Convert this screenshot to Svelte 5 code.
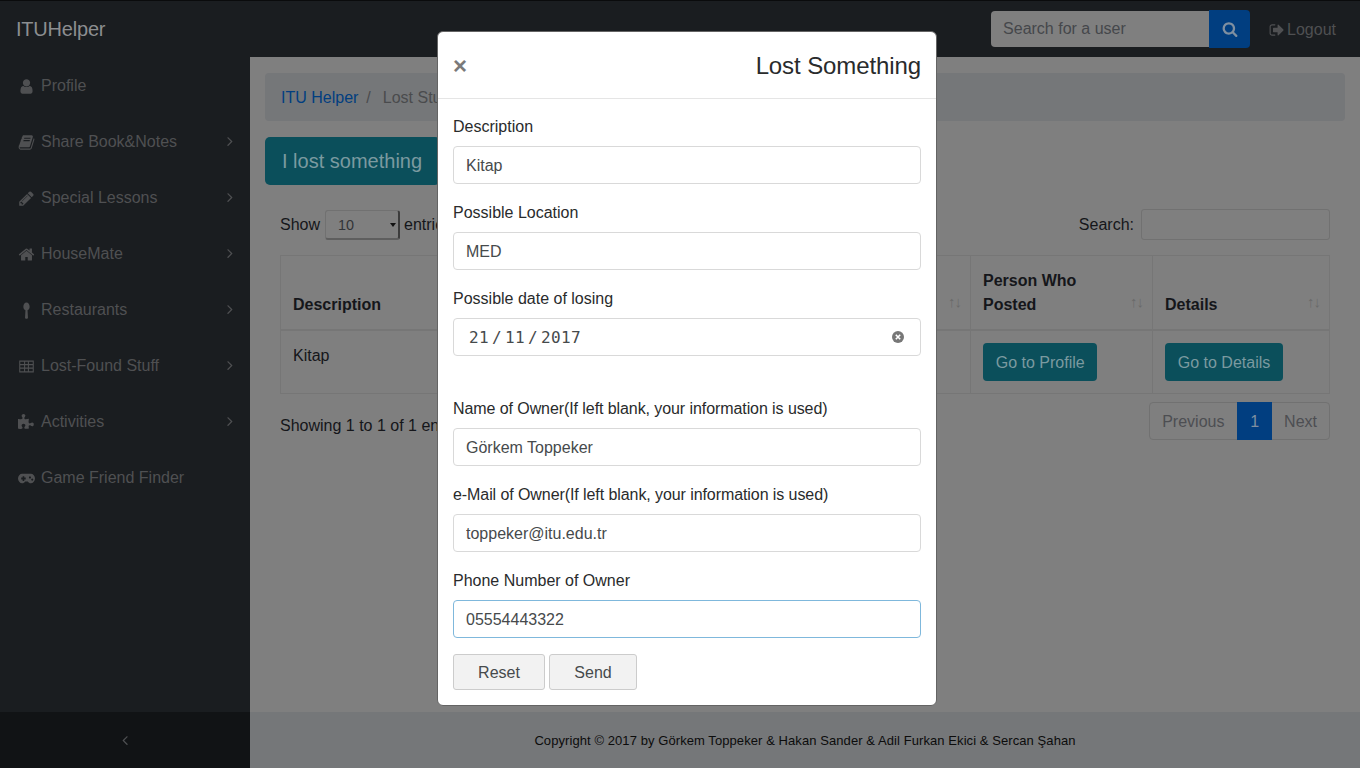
<script>
  const icons = {
    user: 'M1536 1399q0 109-62.5 187t-150.5 78h-854q-88 0-150.5-78t-62.5-187q0-85 8.5-160.5t31.5-152 58.5-131 94-89 134.5-34.5q131 128 313 128t313-128q76 0 134.5 34.5t94 89 58.5 131 31.5 152 8.5 160.5zm-256-887q0 159-112.5 271.5t-271.5 112.5-271.5-112.5-112.5-271.5 112.5-271.5 271.5-112.5 271.5 112.5 112.5 271.5z',
    book: 'M1703 478q40 57 18 129l-275 906q-19 64-76.5 107.5t-122.5 43.5h-923q-77 0-148.5-53.5t-99.5-131.5q-24-67-2-127 0-4 3-27t4-37q1-8-3-21.5t-3-19.5q2-11 8-21t16.5-23.5 16.5-23.5q23-38 45-91.5t30-91.5q3-10 .5-30t-.5-28q3-11 17-28t17-23q21-36 42-92t25-90q1-9-2.5-32t.5-28q4-13 22-30.5t22-22.5q19-26 42.5-84.5t27.5-96.5q1-8-3-25.5t-2-26.5q2-8 9-18t18-23 17-21q8-12 16.5-30.5t15-35 16-36 19.5-32 26.5-23.5 36-11.5 47.5 5.5l-1 3q38-9 51-9h761q74 0 114 56t18 130l-274 906q-36 119-71.5 153.5t-128.5 34.5h-869q-27 0-38 15-11 16-1 43 24 70 144 70h923q29 0 56-15.5t35-41.5l300-987q7-22 5-57 38 15 59 43zm-1064 2q-4 13 2 22.5t20 9.5h608q13 0 25.5-9.5t16.5-22.5l21-64q4-13-2-22.5t-20-9.5h-608q-13 0-25.5 9.5t-16.5 22.5zm-83 256q-4 13 2 22.5t20 9.5h608q13 0 25.5-9.5t16.5-22.5l21-64q4-13-2-22.5t-20-9.5h-608q-13 0-25.5 9.5t-16.5 22.5z',
    pencil: 'M491 1536l91-91-235-235-91 91v107h128v128h107zm523-928q0-22-22-22-10 0-17 7l-542 542q-7 7-7 17 0 22 22 22 10 0 17-7l542-542q7-7 7-17zm-54-192l416 416-832 832h-416v-416zm683 96q0 53-37 90l-166 166-416-416 166-165q36-38 90-38 53 0 91 38l235 234q37 39 37 91z',
    home: 'M1472 992v480q0 26-19 45t-45 19h-384v-384h-256v384h-384q-26 0-45-19t-19-45v-480q0-1 .5-3t.5-3l575-474 575 474q1 2 1 6zm223-69l-62 74q-8 9-21 11h-3q-13 0-21-7l-692-577-692 577q-12 8-24 7-13-2-21-11l-62-74q-8-10-7-23.5t11-21.5l719-599q32-26 76-26t76 26l244 204v-195q0-14 9-23t23-9h192q14 0 23 9t9 23v408l219 182q10 8 11 21.5t-7 23.5z',
    spoon: 'M896 60c190 0 330 190 330 430 0 180-90 320-220 370l44 790c4 70-80 110-154 110s-158-40-154-110l44-790c-130-50-220-190-220-370 0-240 140-430 330-430z',
    table: 'M128 256h1536v1280H128zM240 384v256h400V384zm512 0v256h288V384zm400 0v256h400V384zM240 752v256h400V752zm512 0v256h288V752zm400 0v256h400V752zM240 1120v288h400v-288zm512 0v288h288v-288zm400 0v288h400v-288z',
    puzzle: 'M1664 1098q0 81-44.5 135t-123.5 54q-41 0-77.5-17.5t-59-38-56.5-38-71-17.5q-110 0-110 124 0 39 16 115t15 115v5q-22 0-33 1-34 3-97.5 11.5t-115.5 13.5-98 5q-61 0-103-26.5t-42-83.5q0-37 17.5-71t38-56.5 38-59 17.5-77.5q0-79-54-123.5t-135-44.5q-84 0-143 45.5t-59 127.5q0 43 15 83t33.5 64.5 33.5 53 15 50.5q0 45-46 89-37 35-117 35-95 0-245-24-9-2-27.5-4t-27.5-4l-13-2q-1 0-3-1-2 0-2-1v-1024q2 1 17.5 3.5t34 5 21.5 3.5q150 24 245 24 80 0 117-35 46-44 46-89 0-22-15-50.5t-33.5-53-33.5-64.5-15-83q0-82 59-127.5t144-45.5q80 0 134 44.5t54 123.5q0 41-17.5 77.5t-38 59-38 56.5-17.5 71q0 57 42 83.5t103 26.5q64 0 180-15t163-17v2q-1 2-3.5 17.5t-5 34-3.5 21.5q-24 150-24 245 0 80 35 117 44 46 89 46 22 0 50.5-15t53-33.5 64.5-33.5 83-15q82 0 127.5 59t45.5 143z',
    gamepad: 'M440 400h912c240 0 440 220 440 500s-200 500-440 500c-150 0-240-80-320-190H760c-80 110-170 190-320 190C200 1400 0 1180 0 900s200-500 440-500zM340 800v200h150v150h170V1000h150V800H660V650H490v150zm920-130a110 110 0 1 0 .1 0zm240 230a110 110 0 1 0 .1 0z',
    signout: 'M704 1440q0 4 1 20t.5 26.5-3 23.5-10 19.5-20.5 6.5h-320q-119 0-203.5-84.5t-84.5-203.5v-704q0-119 84.5-203.5t203.5-84.5h320q13 0 22.5 9.5t9.5 22.5q0 4 1 20t.5 26.5-3 23.5-10 19.5-20.5 6.5h-320q-66 0-113 47t-47 113v704q0 66 47 113t113 47h312l11.5 1 11.5 3 8 5.5 7 9 2 13.5zm928-544q0 26-19 45l-544 544q-19 19-45 19t-45-19-19-45v-288h-448q-26 0-45-19t-19-45v-384q0-26 19-45t45-19h448v-288q0-26 19-45t45-19 45 19l544 544q19 19 19 45z',
    search: 'M1216 832q0-185-131.5-316.5t-316.5-131.5-316.5 131.5-131.5 316.5 131.5 316.5 316.5 131.5 316.5-131.5 131.5-316.5zm512 832q0 52-38 90t-90 38q-54 0-90-38l-343-342q-179 124-399 124-143 0-273.5-55.5t-225-150-150-225-55.5-273.5 55.5-273.5 150-225 225-150 273.5-55.5 273.5 55.5 225 150 150 225 55.5 273.5q0 220-124 399l343 343q37 37 37 90z',
    right: 'M1171 960q0 13-10 23l-466 466q-10 10-23 10t-23-10l-50-50q-10-10-10-23t10-23l393-393-393-393q-10-10-10-23t10-23l50-50q10-10 23-10t23 10l466 466q10 10 10 23z',
    left: 'M1203 544q0 13-10 23l-393 393 393 393q10 10 10 23t-10 23l-50 50q-10 10-23 10t-23-10l-466-466q-10-10-10-23t10-23l466-466q10-10 23-10t23 10l50 50q10 10 10 23z'
  };

  const menu = [
    { label: 'Profile', icon: 'user' },
    { label: 'Share Book&Notes', icon: 'book', sub: true },
    { label: 'Special Lessons', icon: 'pencil', sub: true },
    { label: 'HouseMate', icon: 'home', sub: true },
    { label: 'Restaurants', icon: 'spoon', sub: true },
    { label: 'Lost-Found Stuff', icon: 'table', sub: true },
    { label: 'Activities', icon: 'puzzle', sub: true },
    { label: 'Game Friend Finder', icon: 'gamepad' }
  ];

  const fields = [
    { label: 'Name of Owner(If left blank, your information is used)', value: 'Görkem Toppeker', tight: true },
    { label: 'e-Mail of Owner(If left blank, your information is used)', value: 'toppeker@itu.edu.tr', tight: true },
    { label: 'Phone Number of Owner', value: '05554443322', focus: true }
  ];
</script>

<div class="page">
  <nav class="topbar">
    <span class="brand">ITUHelper</span>
    <div class="topright">
      <div class="usersearch">
        <input type="text" placeholder="Search for a user" />
        <button class="searchbtn" aria-label="Search">
          <svg viewBox="0 0 1792 1792" width="16" height="16"><path d={icons.search} /></svg>
        </button>
      </div>
      <a class="logout" href="#top">
        <svg viewBox="0 0 1792 1792" width="16" height="16"><path d={icons.signout} /></svg>
        Logout
      </a>
    </div>
  </nav>

  <div class="body">
    <aside class="sidebar">
      <ul>
        {#each menu as item}
          <li>
            <svg class="ico" viewBox="0 0 1792 1792" width="17" height="17"><path fill-rule="evenodd" d={icons[item.icon]} /></svg>
            <span>{item.label}</span>
            {#if item.sub}
              <svg class="chev" viewBox="0 0 1792 1792" width="16" height="16"><path d={icons.right} /></svg>
            {/if}
          </li>
        {/each}
      </ul>
      <div class="toggler">
        <svg viewBox="0 0 1792 1792" width="16" height="16"><path d={icons.left} /></svg>
      </div>
    </aside>

    <div class="content">
      <main>
        <ol class="crumbs">
          <li><a href="#top">ITU Helper</a></li>
          <li class="sep">/</li>
          <li>Lost Stuff</li>
        </ol>
        <button class="btn-lost">I lost something</button>

        <section class="wrapper">
          <div class="tools">
            <div class="length">
              Show
              <div class="select"><span>10</span><i></i></div>
              entries
            </div>
            <label class="filter">Search: <input type="search" /></label>
          </div>

          <table>
            <colgroup>
              <col class="c1" /><col class="c2" /><col class="c3" /><col class="c4" /><col />
            </colgroup>
            <thead>
              <tr>
                <th>Description</th>
                <th></th>
                <th><span class="sort">↑↓</span></th>
                <th>Person Who Posted<span class="sort">↑↓</span></th>
                <th>Details<span class="sort">↑↓</span></th>
              </tr>
            </thead>
            <tbody>
              <tr>
                <td>Kitap</td>
                <td></td>
                <td></td>
                <td><button class="btn-info">Go to Profile</button></td>
                <td><button class="btn-info">Go to Details</button></td>
              </tr>
            </tbody>
          </table>

          <div class="tablefoot">
            <div class="info">Showing 1 to 1 of 1 entries</div>
            <div class="pager">
              <span class="prev">Previous</span>
              <span class="current">1</span>
              <span>Next</span>
            </div>
          </div>
        </section>
      </main>
      <footer>Copyright © 2017 by Görkem Toppeker &amp; Hakan Sander &amp; Adil Furkan Ekici &amp; Sercan Şahan</footer>
    </div>
  </div>

  <div class="modal">
    <header>
      <span class="close">×</span>
      <h4>Lost Something</h4>
    </header>
    <form>
      <div class="group">
        <label for="f-desc">Description</label>
        <input id="f-desc" value="Kitap" />
      </div>
      <div class="group">
        <label for="f-loc">Possible Location</label>
        <input id="f-loc" value="MED" />
      </div>
      <div class="group dategroup">
        <label for="f-date">Possible date of losing</label>
        <div class="date" id="f-date">
          <span>21</span><b>/</b><span>11</span><b>/</b><span>2017</span>
          <svg class="clear" viewBox="0 0 12 12" width="12" height="12">
            <circle cx="6" cy="6" r="6" fill="#777" />
            <path d="M3.8 3.8l4.4 4.4M8.2 3.8l-4.4 4.4" stroke="#fff" stroke-width="1.6" />
          </svg>
        </div>
      </div>
      {#each fields as f, i}
        <div class="group">
          <label for={'f-' + i} class:tight={f.tight}>{f.label}</label>
          <input id={'f-' + i} class:focus={f.focus} value={f.value} />
        </div>
      {/each}
      <div class="actions">
        <button type="button" class="reset">Reset</button>
        <button type="button" class="send">Send</button>
      </div>
    </form>
  </div>
</div>

<style>
  :global(body) {
    margin: 0;
    font-family: "Liberation Sans", Arial, sans-serif;
    font-size: 16px;
    line-height: 24px;
    color: #15161a;
  }

  /* everything outside the modal is the page as seen under a 50% backdrop */
  .page {
    --dark: #1a1d20;
    --grey: #7f7f7f;
    --blue: #013e80;
    --teal: #0b4f5b;
    --muted: #4f5052;
    position: relative;
    width: 1360px;
    height: 768px;
    overflow: hidden;
    background: var(--grey);
  }

  .topbar {
    box-sizing: border-box;
    height: 57px;
    display: flex;
    align-items: center;
    justify-content: space-between;
    padding: 0 24px 1px 16px;
    background: var(--dark);
    border-top: 1px solid #0a0b0c;
  }

  .brand {
    font-size: 20px;
    letter-spacing: -.2px;
    color: #8c8e90;
  }

  .topright {
    display: flex;
    align-items: center;
    gap: 19px;
  }

  .usersearch {
    display: flex;
    align-items: center;
  }

  .usersearch input {
    box-sizing: border-box;
    width: 218px;
    height: 36px;
    padding: 0 12px;
    border: 0;
    border-radius: 4px 0 0 4px;
    background: #7f7f7f;
    font: 16px "Liberation Sans", sans-serif;
  }

  .usersearch input::placeholder {
    color: #45474b;
    opacity: 1;
  }

  .searchbtn {
    width: 41px;
    height: 38px;
    display: flex;
    align-items: center;
    justify-content: center;
    padding: 0;
    border: 0;
    border-radius: 0 4px 4px 0;
    background: var(--blue);
  }

  .searchbtn path {
    fill: #7f8fa0;
  }

  .logout {
    display: flex;
    align-items: center;
    gap: 2px;
    padding-top: 2px;
    color: var(--muted);
    text-decoration: none;
  }

  .logout path {
    fill: var(--muted);
  }

  .body {
    display: flex;
    height: 711px;
  }

  .sidebar {
    width: 250px;
    flex: none;
    display: flex;
    flex-direction: column;
    justify-content: space-between;
    background: var(--dark);
  }

  .sidebar ul {
    margin: 0;
    padding: 0;
    list-style: none;
  }

  .sidebar li {
    box-sizing: border-box;
    height: 56px;
    display: flex;
    align-items: center;
    gap: 6px;
    padding: 2px 12px 0 18px;
    color: var(--muted);
  }

  .ico {
    flex: none;
  }

  .sidebar path {
    fill: var(--muted);
  }

  .chev {
    margin: -2px 0 0 auto;
  }

  .toggler {
    height: 56px;
    display: flex;
    align-items: center;
    justify-content: center;
    background: #111315;
  }

  .content {
    flex: 1;
    display: flex;
    flex-direction: column;
    justify-content: space-between;
  }

  main {
    padding: 16px 15px 0;
  }

  .crumbs {
    display: flex;
    gap: 8px;
    height: 48px;
    box-sizing: border-box;
    margin: 0 0 16px;
    padding: 13px 16px 11px;
    list-style: none;
    border-radius: 4px;
    background: #757779;
    color: #4a4b4d;
  }

  .crumbs a {
    color: var(--blue);
    text-decoration: none;
  }

  .sep {
    margin-right: 4px;
  }

  .btn-lost {
    width: 175px;
    height: 48px;
    display: block;
    padding: 0 0 0 17px;
    border: 0;
    border-radius: 5px;
    background: var(--teal);
    color: #7b9aa0;
    text-align: left;
    font: 20px "Liberation Sans", sans-serif;
  }

  .wrapper {
    padding: 24px 15px 0;
  }

  .tools {
    display: flex;
    justify-content: space-between;
    align-items: flex-start;
    height: 31px;
    margin-bottom: 15px;
  }

  .length {
    display: flex;
    align-items: center;
    gap: 4px;
    height: 31px;
  }

  .select {
    position: relative;
    box-sizing: border-box;
    width: 75px;
    height: 30px;
    margin-left: 1px;
    padding-left: 12px;
    border: 1px solid #717171;
    border-right: 2px solid #3c3c3c;
    border-bottom: 2px solid #5e5e5e;
    border-radius: 3px;
    font-size: 14.4px;
    line-height: 29px;
    color: #323437;
  }

  .select i {
    position: absolute;
    right: 2px;
    top: 12px;
    border: 3px solid transparent;
    border-top: 4px solid #111;
    border-bottom: 0;
  }

  .filter {
    display: flex;
    align-items: center;
    gap: 7px;
    height: 31px;
  }

  .filter input {
    box-sizing: border-box;
    width: 189px;
    height: 31px;
    border: 1px solid #717171;
    border-radius: 3px;
    background: transparent;
  }

  table {
    box-sizing: border-box;
    width: 1050px;
    table-layout: fixed;
    border-collapse: collapse;
    border: 1px solid #767676;
  }

  .c1 {
    width: 201px;
  }

  .c2 {
    width: 245px;
  }

  .c3 {
    width: 244px;
  }

  .c4 {
    width: 182px;
  }

  th,
  td {
    padding: 12px;
    border: 1px solid #767676;
    text-align: left;
    vertical-align: top;
  }

  th {
    position: relative;
    vertical-align: bottom;
    padding: 13px 30px 12px 12px;
    border-bottom-width: 2px;
  }

  td:first-child {
    padding-top: 13px;
  }

  .sort {
    position: absolute;
    right: 9px;
    bottom: 15px;
    font-size: 15px;
    font-weight: 400;
    letter-spacing: -1px;
    color: #6a6a6a;
  }

  .btn-info {
    height: 38px;
    padding: 2px 12.75px 0;
    border: 0;
    border-radius: 4px;
    background: var(--teal);
    color: #7b9aa0;
    font: 16px "Liberation Sans", sans-serif;
  }

  .tablefoot {
    display: flex;
    justify-content: space-between;
    align-items: flex-start;
    margin-top: 8px;
  }

  .info {
    padding-top: 12px;
  }

  .pager {
    display: flex;
    height: 38px;
    box-sizing: border-box;
    border: 1px solid #717171;
    border-radius: 4px;
    color: #4d4e52;
  }

  .pager span {
    padding: 7px 12px 5px;
  }

  .pager .prev {
    box-sizing: border-box;
    width: 87px;
  }

  .pager .current {
    margin: -1px 0;
    padding: 8px 13px 6px;
    background: var(--blue);
    color: #7f8fa0;
  }

  footer {
    box-sizing: border-box;
    height: 56px;
    display: flex;
    align-items: center;
    justify-content: center;
    padding-top: 2px;
    background: #757779;
    font-size: 13px;
    letter-spacing: .077px;
    color: #0c0c0c;
  }

  .modal {
    position: absolute;
    top: 31px;
    left: 437px;
    box-sizing: border-box;
    width: 500px;
    height: 675px;
    border: 1px solid #646464;
    border-radius: 6px;
    background: #fff;
    color: #292b2c;
  }

  .modal header {
    box-sizing: border-box;
    height: 67px;
    display: flex;
    align-items: center;
    justify-content: space-between;
    padding: 2px 15px 0;
    border-bottom: 1px solid #e5e5e5;
  }

  .close {
    font-size: 24px;
    font-weight: 700;
    color: #7a7a7a;
  }

  .modal h4 {
    margin: 0;
    font-size: 24px;
    font-weight: 400;
    letter-spacing: -.1px;
  }

  form {
    padding: 15px 15px 0;
  }

  .group {
    margin-bottom: 16px;
  }

  .dategroup {
    margin-bottom: 40px;
  }

  .group label {
    display: block;
    padding-top: 1px;
    margin-bottom: 7px;
  }

  .group label.tight {
    letter-spacing: -.08px;
  }

  .group input,
  .date {
    box-sizing: border-box;
    display: block;
    width: 468px;
    height: 38px;
    padding: 2px 12px 0;
    border: 1px solid #d9d9d9;
    border-radius: 4px;
    background: #fff;
    color: #464a4c;
    font: 16px "Liberation Sans", sans-serif;
    outline: none;
  }

  .group input.focus {
    border-color: #7fb8dc;
  }

  .date {
    display: flex;
    align-items: center;
    padding: 0 0 0 15px;
    font: 16px "DejaVu Sans Mono", monospace;
    letter-spacing: .37px;
  }

  .date b {
    margin: 0 3px;
    font-weight: 400;
  }

  .clear {
    margin-left: auto;
    margin-right: 16px;
  }

  .actions {
    display: flex;
    gap: 4px;
  }

  .actions button {
    box-sizing: border-box;
    height: 36px;
    padding: 1px 0 0;
    border: 1px solid #ccc;
    border-radius: 3px;
    background: #f2f2f2;
    color: #464a4c;
    font: 16px "Liberation Sans", sans-serif;
  }

  .reset {
    width: 92px;
  }

  .send {
    width: 88px;
  }
</style>
